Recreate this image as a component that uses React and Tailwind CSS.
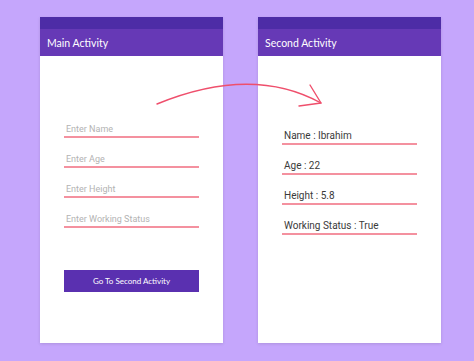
import React from 'react';

const Field = ({ children, className }) => (
    <div className={`pt-[6px] leading-[14px] border-b-2 border-[#f4919f] ${className}`}>{children}</div>
);

const Panel = ({ title, children, pad }) => (
    <div className="w-[183px] h-[326px] bg-white shadow-[0_1px_3px_rgba(0,0,0,0.12)] flex flex-col">
        <div className="h-[12px] bg-[#4d2ca6]" />
        <div className="h-[27px] bg-[#6639b6] flex items-center px-[7px] pt-[2px]">
            <span className="text-white text-[10.5px] font-['Lato',sans-serif]">{title}</span>
        </div>
        <div className={`flex flex-col px-[24px] ${pad}`}>{children}</div>
    </div>
);

export default function App() {
    const inputs = ['Enter Name', 'Enter Age', 'Enter Height', 'Enter Working Status'];
    const values = ['Name : Ibrahim', 'Age : 22', 'Height : 5.8', 'Working Status : True'];

    return (
        <div className="relative w-[474px] h-[361px] bg-[#c5a6fc] overflow-hidden">
            <div className="flex gap-[35px] pl-[40px] pt-[17px]">
                <Panel title="Main Activity" pad="pt-[60px]">
                    {inputs.map((t, i) => (
                        <Field key={t} className={`text-[9px] text-[#b3b3b3] font-['Roboto',sans-serif] pl-[2px] ${i ? 'mt-[8px]' : ''}`}>
                            {t}
                        </Field>
                    ))}
                    <button className="mt-[42px] h-[22px] bg-[#5a30b0] text-white text-[8px] font-['Lato',sans-serif]">
                        Go To Second Activity
                    </button>
                </Panel>
                <Panel title="Second Activity" pad="pt-[67px]">
                    {values.map((t, i) => (
                        <Field key={t} className={`text-[10px] text-[#3a3a3a] font-['Roboto',sans-serif] pl-[2px] ${i ? 'mt-[8px]' : ''}`}>
                            {t}
                        </Field>
                    ))}
                </Panel>
            </div>
            <svg className="absolute top-0 left-0 pointer-events-none" width="474" height="361" viewBox="0 0 474 361" fill="none">
                <path d="M157 104 Q 252 65 321 103" stroke="#ef4f6c" strokeWidth="1.4" strokeLinecap="round" />
                <path d="M310 85 L321 103 L299 106" stroke="#ef4f6c" strokeWidth="1.4" strokeLinecap="round" strokeLinejoin="round" />
            </svg>
        </div>
    );
}
